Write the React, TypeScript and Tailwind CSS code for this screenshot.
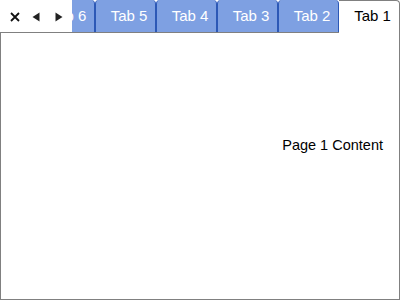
const TABS = ['Tab 6', 'Tab 5', 'Tab 4', 'Tab 3', 'Tab 2', 'Tab 1'];

export default function App() {
  const active = 'Tab 1';
  return (
    <div
      className="w-[400px] h-[300px] bg-white flex flex-col text-[15px]"
      style={{ fontFamily: '"Liberation Sans", Arial, sans-serif' }}
    >
      {/* header row */}
      <div className="flex h-[33px] shrink-0">
        <div className="w-[72px] shrink-0 flex items-center border-b border-[#808080] bg-white z-10">
          <button className="w-[26px] h-[32px] flex items-center justify-center pl-[4px] pt-[1px]">
            <svg width="10" height="10" viewBox="0 0 10 10">
              <path d="M1 1 L9 9 M9 1 L1 9" stroke="#111" strokeWidth="1.8" />
            </svg>
          </button>
          <button className="w-[20px] h-[32px] flex items-center justify-center pt-[1px]">
            <svg width="8" height="10" viewBox="0 0 8 10">
              <path d="M7.5 0.5 L0.5 5 L7.5 9.5 Z" fill="#222" />
            </svg>
          </button>
          <button className="w-[26px] h-[32px] flex items-center justify-center pt-[1px]">
            <svg width="8" height="10" viewBox="0 0 8 10">
              <path d="M0.5 0.5 L7.5 5 L0.5 9.5 Z" fill="#222" />
            </svg>
          </button>
        </div>
        <div className="flex-1 flex justify-end overflow-hidden">
          {TABS.map((t) =>
            t === active ? (
              <div
                key={t}
                className="w-[61px] shrink-0 h-[33px] flex items-center justify-center pl-[7px] bg-white text-black border-t border-r border-[#808080] rounded-tr-[4px] pb-[1px]"
              >
                {t}
              </div>
            ) : (
              <div
                key={t}
                className="w-[61px] shrink-0 h-[33px] flex items-center justify-center pl-[7px] bg-[#7ea0e2] text-white border-x border-[#2c58b6] rounded-t-[4px] relative"
              >
                <span className="pb-[1px]">{t}</span>
                <div className="absolute left-[-1px] right-[-1px] bottom-0 h-px bg-[#808080]" />
              </div>
            )
          )}
        </div>
      </div>
      {/* content */}
      <div className="flex-1 border-x border-b border-[#808080] flex justify-end pt-[104px] pr-[16px]">
        <div className="text-black text-[14.5px] leading-[17px] h-[17px]">Page 1 Content</div>
      </div>
    </div>
  );
}
